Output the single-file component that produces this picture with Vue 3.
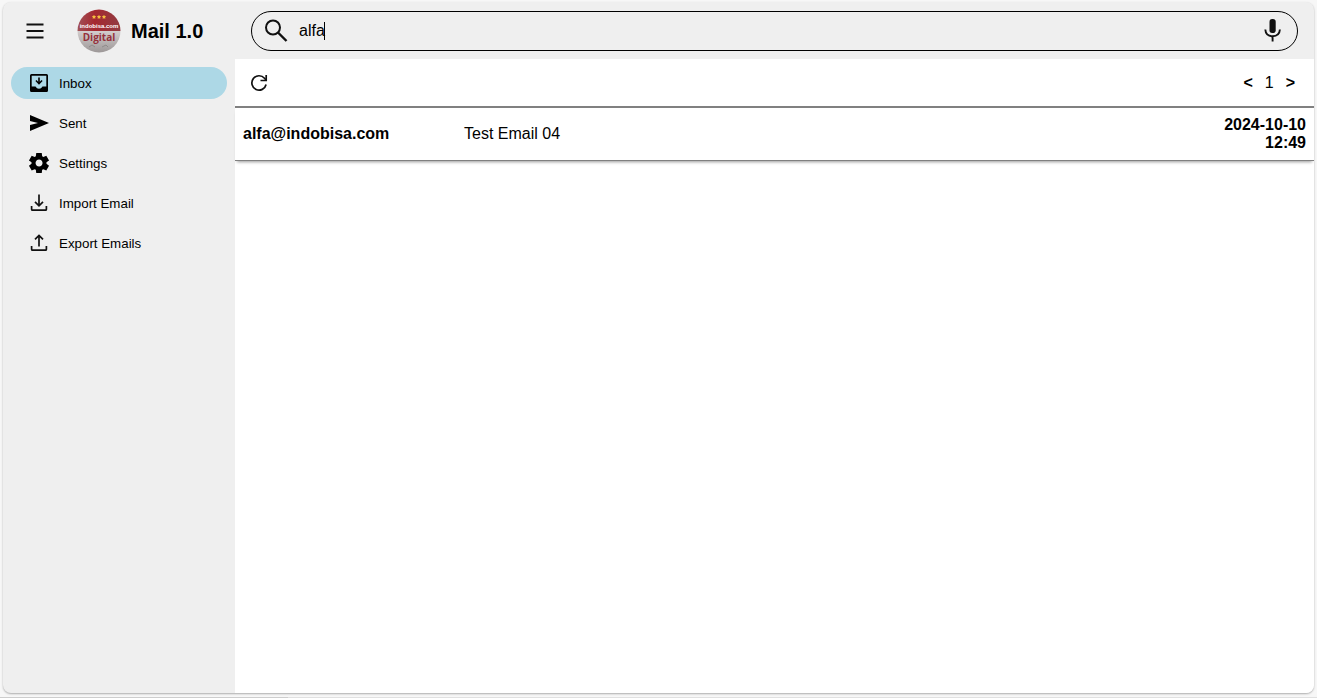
<template>
  <div class="page">
    <div class="mail-app">
      <header class="topbar">
        <div class="brand">
          <button class="icon-btn menu-btn" type="button" aria-label="Menu">
            <svg width="24" height="24" viewBox="0 0 24 24">
              <path d="M3.500 5.500h17M3.500 12h17M3.500 18.500h17" fill="none" stroke="#111" stroke-width="1.800" />
            </svg>
          </button>
          <svg class="logo" width="44" height="44" viewBox="0 0 44 44" role="img" aria-label="indobisa.com Digital">
            <defs>
              <clipPath id="logo-circle"><circle cx="22" cy="22" r="21.5" /></clipPath>
              <linearGradient id="logo-red" x1="0" y1="0" x2="1" y2="0">
                <stop offset="0" stop-color="#a05358" />
                <stop offset="0.4" stop-color="#a52830" />
                <stop offset="1" stop-color="#913c42" />
              </linearGradient>
              <linearGradient id="logo-grey" x1="0" y1="0" x2="0" y2="1">
                <stop offset="0" stop-color="#d3cdcd" />
                <stop offset="1" stop-color="#9b9696" />
              </linearGradient>
            </defs>
            <g clip-path="url(#logo-circle)">
              <rect width="44" height="22" fill="url(#logo-red)" />
              <rect y="22" width="44" height="22" fill="url(#logo-grey)" />
            </g>
            <g fill="#f6bd3f">
              <path v-for="x in [17, 22, 27]" :key="x" :d="starPath(x, 8)" />
            </g>
            <text x="22" y="19" class="logo-name">indobisa.com</text>
            <text x="22" y="32" class="logo-sub">Digital</text>
            <path d="M12 38l3-2 3 2M25 38l4-2 2 2" fill="none" stroke="#8f8a8a" stroke-width="1" />
          </svg>
          <h1 class="title">Mail 1.0</h1>
        </div>

        <form class="search" @submit.prevent>
          <svg class="search-icon" width="24" height="24" viewBox="0 0 24 24">
            <circle cx="9" cy="8.500" r="7" fill="none" stroke="#111" stroke-width="2" />
            <path d="M14 13.500l8.500 8.500" fill="none" stroke="#111" stroke-width="2.400" />
          </svg>
          <div class="search-field">
            <input v-model="query" type="text" aria-label="Search mail" />
            <span class="caret"></span>
          </div>
          <button class="icon-btn" type="button" aria-label="Voice search">
            <svg width="24" height="24" viewBox="0 0 24 24">
              <rect x="8.500" y="0" width="6.200" height="14" rx="2.800" fill="#111" />
              <path d="M4.300 10.500c.3 4.300 3.300 6.700 7.300 6.700s7-2.400 7.300-6.700M11.600 17v5.500" fill="none" stroke="#111" stroke-width="1.900" />
            </svg>
          </button>
        </form>
      </header>

      <div class="body">
        <nav class="sidebar">
          <button
            v-for="item in folders"
            :key="item.name"
            class="nav-item"
            :class="{ active: item.name === current }"
            type="button"
            @click="current = item.name"
          >
            <svg width="24" height="24" viewBox="0 0 24 24">
              <path :d="item.icon" :class="{ outline: item.outline }" />
            </svg>
            <span>{{ item.name }}</span>
          </button>
        </nav>

        <main class="content">
          <div class="toolbar">
            <button class="icon-btn" type="button" aria-label="Refresh">
              <svg width="24" height="24" viewBox="0 0 24 24" fill="none" stroke="#111" stroke-width="1.700">
                <path d="M19.100 13.500A7.200 7.200 0 1 1 17.500 7.200L19 9" />
                <path d="M19.200 4v5.500h-5.700" />
              </svg>
            </button>
            <div class="pager">
              <button type="button" aria-label="Previous page">&lt;</button>
              <span>{{ page }}</span>
              <button type="button" aria-label="Next page">&gt;</button>
            </div>
          </div>

          <table class="mail-list">
            <tbody>
              <tr v-for="mail in mails" :key="mail.date + mail.time">
                <td class="sender">{{ mail.from }}</td>
                <td class="subject">{{ mail.subject }}</td>
                <td class="date">{{ mail.date }} {{ mail.time }}</td>
              </tr>
            </tbody>
          </table>
        </main>
      </div>
    </div>
    <div class="bottom-edge"></div>
  </div>
</template>

<script setup>
import { ref } from 'vue'

const query = ref('alfa')
const current = ref('Inbox')
const page = ref(1)

const folders = [
  {
    name: 'Inbox',
    icon: 'M4.500 3h15a1.500 1.500 0 0 1 1.500 1.500v15a1.500 1.500 0 0 1-1.500 1.500h-15a1.500 1.500 0 0 1-1.500-1.500v-15A1.500 1.500 0 0 1 4.500 3zM4.700 4.700v10.800H8.500q1.200 2.200 3.500 2.200t3.500-2.200h3.800V4.700zM11.200 6.500h1.600v4.200l1.700-1.700 1.100 1.100L12 13.700 8.400 10.100 9.500 9l1.700 1.700z'
  },
  {
    name: 'Sent',
    icon: 'M3 20v-6l8-2-8-2V4l19 8z'
  },
  {
    name: 'Settings',
    icon: 'M9.250 22l-.4-3.200q-.325-.125-.612-.3t-.563-.375L4.700 19.375l-2.750-4.750 2.575-1.950Q4.500 12.500 4.500 12.338v-.675q0-.163.025-.338L1.950 9.375l2.750-4.750 2.975 1.250q.275-.2.575-.375t.6-.3l.4-3.200h5.500l.4 3.200q.325.125.613.300t.562.375l2.975-1.250 2.750 4.750-2.575 1.950q.025.175.025.338v.675q0 .162-.05.337l2.575 1.950-2.750 4.750-2.950-1.250q-.275.200-.575.375t-.6.300l-.4 3.200zm2.800-6.500q1.450 0 2.475-1.025T15.550 12t-1.025-2.475T12.050 8.500q-1.475 0-2.488 1.025T8.550 12t1.012 2.475T12.050 15.500'
  },
  {
    name: 'Import Email',
    icon: 'M12 3.500v11M8 10.800l4 4 4-4M4.600 15v3.200q0 1 1 1h12.800q1 0 1-1V15',
    outline: true
  },
  {
    name: 'Export Emails',
    icon: 'M12 15.500v-11M8 8.400l4-4 4 4M4.600 15v3.200q0 1 1 1h12.800q1 0 1-1V15',
    outline: true
  }
]

const mails = [
  { from: 'alfa@indobisa.com', subject: 'Test Email 04', date: '2024-10-10', time: '12:49' }
]

// five-pointed star centred on cx, cy
const starPath = (cx, cy) => {
  const points = []
  for (let i = 0; i < 10; i++) {
    const r = i % 2 ? 1.2 : 2.3
    const a = (Math.PI / 5) * i - Math.PI / 2
    points.push(`${cx + r * Math.cos(a)} ${cy + r * Math.sin(a)}`)
  }
  return `M${points.join('L')}z`
}
</script>

<style>
body {
  margin: 0;
  background: #f7f7f7;
}
</style>

<style scoped>
.page {
  display: flex;
  flex-direction: column;
  box-sizing: border-box;
  min-height: 100vh;
  padding: 2px 3px 0;
  font-family: "Liberation Sans", Arial, sans-serif;
  font-size: 16px;
  line-height: 18px;
  color: #000;
}

.mail-app {
  flex: 1;
  display: flex;
  flex-direction: column;
  margin-bottom: 4px;
  background: #efefef;
  border-radius: 8px;
  box-shadow: 0 1px 2px rgba(0, 0, 0, 0.3);
  overflow: hidden;
}

.bottom-edge {
  height: 1px;
  margin: 0 -3px;
  background: linear-gradient(90deg, #cdcdcd 288px, #e0e0e0 288px);
}

button {
  font-family: inherit;
  color: inherit;
  background: none;
  border: none;
  padding: 0;
  cursor: pointer;
}

svg {
  display: block;
  flex: none;
}

.icon-btn {
  display: flex;
}

.topbar {
  display: flex;
  align-items: center;
  height: 57px;
}

.brand {
  display: flex;
  align-items: center;
  flex: none;
  box-sizing: border-box;
  width: 248px;
  padding-left: 20px;
}

.logo {
  margin: 0 10px 0 30px;
}

.logo-name {
  font-family: "Liberation Sans Narrow", "Liberation Sans", sans-serif;
  font-size: 6px;
  font-weight: bold;
  fill: #fff;
  text-anchor: middle;
}

.logo-sub {
  font-family: "Open Sans", sans-serif;
  font-size: 10px;
  font-weight: bold;
  fill: #96313b;
  text-anchor: middle;
}

.title {
  margin: 0;
  font-size: 20px;
  line-height: 24px;
}

.search {
  flex: 1;
  display: flex;
  align-items: center;
  box-sizing: border-box;
  height: 40px;
  margin-right: 16px;
  padding: 0 12px;
  border: 1px solid #000;
  border-radius: 20px;
}

.search-field {
  position: relative;
  flex: 1;
  margin: 0 12px 0 11px;
}

.search-field input {
  display: block;
  width: 100%;
  padding: 0;
  border: none;
  outline: none;
  background: none;
  font: inherit;
  color: #000;
}

.caret {
  position: absolute;
  left: 25px;
  top: 0;
  width: 1px;
  height: 18px;
  background: #000;
}

.body {
  flex: 1;
  display: flex;
}

.sidebar {
  display: flex;
  flex-direction: column;
  gap: 8px;
  box-sizing: border-box;
  width: 232px;
  padding: 8px;
}

.nav-item {
  display: flex;
  align-items: center;
  gap: 8px;
  height: 32px;
  padding: 0 16px;
  border-radius: 16px;
}

.nav-item path {
  fill-rule: evenodd;
}

.nav-item .outline {
  fill: none;
  stroke: #111;
  stroke-width: 1.7;
}

.nav-item.active {
  background: lightblue;
}

.content {
  flex: 1;
  min-width: 0;
  background: #fff;
}

.toolbar {
  display: flex;
  align-items: center;
  justify-content: space-between;
  height: 47px;
  padding: 0 19px 0 12px;
  border-bottom: 2px solid gray;
}

.pager {
  display: flex;
  align-items: center;
  gap: 12px;
}

.pager button {
  font-size: 16px;
  font-weight: bold;
}

.mail-list {
  width: 100%;
  table-layout: fixed;
  border-collapse: collapse;
  border-bottom: 1px solid gray;
  box-shadow: 0 3px 3px -2px rgba(0, 0, 0, 0.4);
}

.mail-list td {
  padding: 8px;
}

.sender {
  width: 205px;
  font-weight: bold;
}

.mail-list .date {
  width: 88px;
  font-weight: bold;
  text-align: right;
}
</style>
